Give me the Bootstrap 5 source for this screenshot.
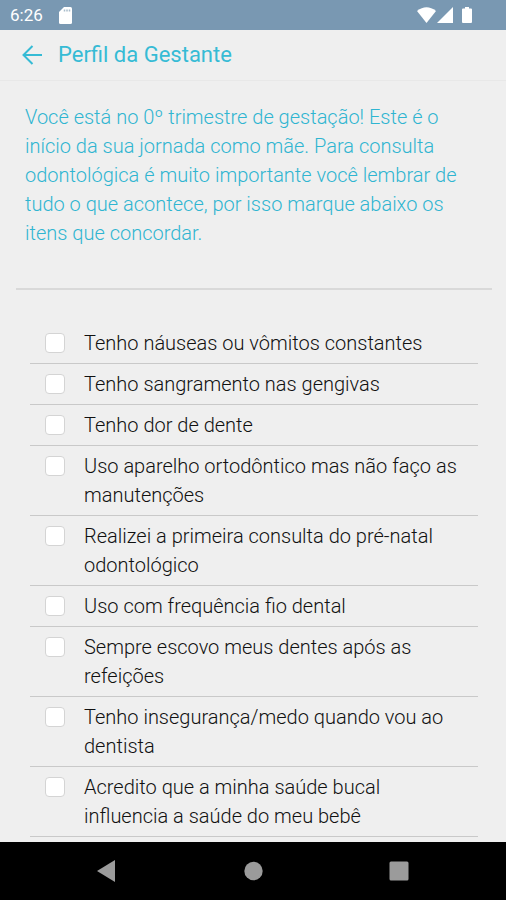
<!DOCTYPE html>
<html lang="pt-BR">
<head>
<meta charset="utf-8">
<meta name="viewport" content="width=device-width, initial-scale=1">
<title>Perfil da Gestante</title>
<link href="https://cdn.jsdelivr.net/npm/bootstrap@5.3.0/dist/css/bootstrap.min.css" rel="stylesheet">
<style>
  body { font-family: Roboto, "Liberation Sans", sans-serif; background: #efefef; color: #111; font-size: 20px; line-height: 29px; font-weight: 300; }
  .status-bar { background: #7998b2; height: 30px; padding: 0 33px 0 10px; font-size: 17px; line-height: 30px; font-weight: 400; }
  .app-bar { height: 51px; padding: 0 22px; border-bottom: 1px solid #e8e8e8; color: #36bbd5; }
  .app-bar h1 { font-size: 22px; line-height: 30px; font-weight: 400; }
  .back-link { color: inherit; line-height: 0; }
  .intro { color: #2fb5d1; padding: 22px 25px 40px; }
  .divider { margin: 0 14px 0 16px; border-top: 2px solid #d9d9d9; opacity: 1; }
  .checklist { padding: 33px 28px 4px 30px; }
  .check-row { padding: 6px 14px 5px 15px; gap: 19px; border-bottom: 1px solid #c9c9c9; }
  .check-row .form-check-input { width: 20px; height: 20px; margin: 4px 0 0; border: 1px solid #d4d4d4; border-radius: 4px; }
  .system-nav { background: #000; height: 58px; padding: 0 34px; }
  .system-nav .btn { line-height: 0; border-radius: 0; }
</style>
<script src="https://cdn.jsdelivr.net/npm/bootstrap@5.3.0/dist/js/bootstrap.bundle.min.js"></script>
</head>
<body>
<div class="d-flex flex-column min-vh-100">
  <div class="status-bar d-flex align-items-center text-white">
    <span>6:26</span>
    <svg class="ms-3" width="13" height="17" viewBox="0 0 13 17" aria-hidden="true"><path d="M5 0h6.500Q13 0 13 1.500v14q0 1.500-1.500 1.500h-10Q0 17 0 15.500V5z" fill="#fff"/><path d="M5.500 2.500v2M8 2.500v2M10.500 2.500v2" stroke="#a9bccb" stroke-width="1.500"/></svg>
    <svg class="ms-auto" width="56" height="17" viewBox="0 0 56 17" aria-hidden="true" fill="#fff"><path d="M0 4Q9.500-3.500 19 4L9.500 16z"/><path d="M36 0v16H20z"/><path d="M46 1.500h2V0h4v1.500h2q1 0 1 1V15q0 1-1 1h-8q-1 0-1-1V2.500q0-1 1-1z"/></svg>
  </div>
  <header class="app-bar d-flex align-items-center gap-3">
    <a class="back-link" href="#" aria-label="Voltar"><svg width="20" height="20" viewBox="0 0 20 20" fill="none" stroke="currentColor" stroke-width="2"><path d="M20 10H1.500M10.500 1 1.500 10l9 9"/></svg></a>
    <h1 class="m-0">Perfil da Gestante</h1>
  </header>
  <main class="flex-grow-1">
    <p class="intro m-0">Você está no 0º trimestre de gestação! Este é o início da sua jornada como mãe. Para consulta odontológica é muito importante você lembrar de tudo o que acontece, por isso marque abaixo os itens que concordar.</p>
    <hr class="divider">
    <form class="checklist">
      <div class="check-row d-flex"><input class="form-check-input flex-shrink-0" type="checkbox" id="c1"><label for="c1">Tenho náuseas ou vômitos constantes</label></div>
      <div class="check-row d-flex"><input class="form-check-input flex-shrink-0" type="checkbox" id="c2"><label for="c2">Tenho sangramento nas gengivas</label></div>
      <div class="check-row d-flex"><input class="form-check-input flex-shrink-0" type="checkbox" id="c3"><label for="c3">Tenho dor de dente</label></div>
      <div class="check-row d-flex"><input class="form-check-input flex-shrink-0" type="checkbox" id="c4"><label for="c4">Uso aparelho ortodôntico mas não faço as manutenções</label></div>
      <div class="check-row d-flex"><input class="form-check-input flex-shrink-0" type="checkbox" id="c5"><label for="c5">Realizei a primeira consulta do pré-natal odontológico</label></div>
      <div class="check-row d-flex"><input class="form-check-input flex-shrink-0" type="checkbox" id="c6"><label for="c6">Uso com frequência fio dental</label></div>
      <div class="check-row d-flex"><input class="form-check-input flex-shrink-0" type="checkbox" id="c7"><label for="c7">Sempre escovo meus dentes após as refeições</label></div>
      <div class="check-row d-flex"><input class="form-check-input flex-shrink-0" type="checkbox" id="c8"><label for="c8">Tenho insegurança/medo quando vou ao dentista</label></div>
      <div class="check-row d-flex"><input class="form-check-input flex-shrink-0" type="checkbox" id="c9"><label for="c9">Acredito que a minha saúde bucal influencia a saúde do meu bebê</label></div>
    </form>
  </main>
  <nav class="system-nav d-flex align-items-center" aria-label="Sistema">
    <button type="button" class="btn border-0 p-2 flex-fill" aria-label="Voltar"><svg width="20" height="22" viewBox="0 0 20 22" fill="#9b9b9b"><path d="M18 0v22L0 11z"/></svg></button>
    <button type="button" class="btn border-0 p-2 flex-fill" aria-label="Início"><svg width="20" height="20" viewBox="0 0 20 20" fill="#9b9b9b"><circle cx="10.500" cy="10" r="9.200"/></svg></button>
    <button type="button" class="btn border-0 p-2 flex-fill" aria-label="Recentes"><svg width="20" height="20" viewBox="0 0 20 20" fill="#9b9b9b"><rect x="0.500" y="0.500" width="19" height="19" rx="1.500"/></svg></button>
  </nav>
</div>
</body>
</html>
